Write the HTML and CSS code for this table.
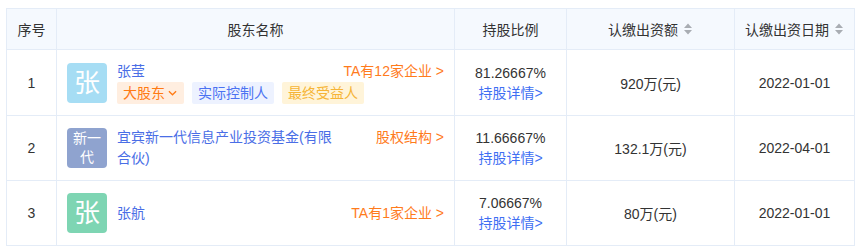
FILE: index.html
```html
<!DOCTYPE html>
<html lang="zh">
<head>
<meta charset="utf-8">
<link rel="stylesheet" href="styles.css">
</head>
<body>
<table class="grid">
  <colgroup>
    <col class="c-no"><col class="c-name"><col class="c-ratio"><col class="c-amt"><col class="c-date">
  </colgroup>
  <thead>
    <tr>
      <th>序号</th>
      <th>股东名称</th>
      <th>持股比例</th>
      <th><span class="sortable">认缴出资额<svg class="sort" viewBox="0 0 10 12"><path d="M5 0.5 L9 5 H1 Z M5 11.5 L9 7 H1 Z" fill="#a9adb3"/></svg></span></th>
      <th><span class="sortable">认缴出资日期<svg class="sort" viewBox="0 0 10 12"><path d="M5 0.5 L9 5 H1 Z M5 11.5 L9 7 H1 Z" fill="#a9adb3"/></svg></span></th>
    </tr>
  </thead>
  <tbody>
    <tr class="r1">
      <td class="num">1</td>
      <td class="holder-cell">
        <div class="holder">
          <div class="avatar av-blue">张</div>
          <div class="info">
            <div class="top">
              <div class="name">张莹</div>
              <span class="olink">TA有12家企业 &gt;</span>
            </div>
            <div class="tags">
              <span class="tag tag-orange">大股东<svg class="chev" viewBox="0 0 10 6"><path d="M1 1 L5 5 L9 1" fill="none" stroke="#ff7a14" stroke-width="1.4"/></svg></span>
              <span class="tag tag-blue">实际控制人</span>
              <span class="tag tag-yellow">最终受益人</span>
            </div>
          </div>
        </div>
      </td>
      <td class="center"><div class="pct">81.26667%</div><div class="blink">持股详情&gt;</div></td>
      <td class="center">920万(元)</td>
      <td class="center">2022-01-01</td>
    </tr>
    <tr class="r2">
      <td class="num">2</td>
      <td class="holder-cell">
        <div class="holder">
          <div class="avatar av-slate small">新一<br>代</div>
          <div class="info">
            <div class="top">
              <div class="name wrap">宜宾新一代信息产业投资基金(有限合伙)</div>
              <span class="olink">股权结构 &gt;</span>
            </div>
          </div>
        </div>
      </td>
      <td class="center"><div class="pct">11.66667%</div><div class="blink">持股详情&gt;</div></td>
      <td class="center">132.1万(元)</td>
      <td class="center">2022-04-01</td>
    </tr>
    <tr class="r3">
      <td class="num">3</td>
      <td class="holder-cell">
        <div class="holder">
          <div class="avatar av-green">张</div>
          <div class="info">
            <div class="top">
              <div class="name">张航</div>
              <span class="olink">TA有1家企业 &gt;</span>
            </div>
          </div>
        </div>
      </td>
      <td class="center"><div class="pct">7.06667%</div><div class="blink">持股详情&gt;</div></td>
      <td class="center">80万(元)</td>
      <td class="center">2022-01-01</td>
    </tr>
  </tbody>
</table>
</body>
</html>
```
FILE: styles.css
```css
body {
  margin: 8px 0 0 6px;
  background: #fff;
  font-family: "Liberation Sans", "Noto Sans CJK SC", sans-serif;
  font-size: 14px;
  color: #333;
}
.grid {
  border-collapse: collapse;
  table-layout: fixed;
  width: 848px;
}
.c-no { width: 50px; }
.c-name { width: 398px; }
.c-ratio { width: 112px; }
.c-amt { width: 168px; }
.c-date { width: 120px; }
.grid th, .grid td {
  border: 1px solid #e4ecf7;
  padding: 0;
  vertical-align: middle;
}
.grid th {
  background: #f5f9fe;
  height: 40px;
  font-weight: normal;
  color: #333;
  text-align: center;
}
.sortable {
  display: inline-flex;
  align-items: center;
  gap: 5px;
}
.sort { width: 10px; height: 12px; }
.r1 td { height: 65px; }
.r2 td, .r3 td { height: 64px; }
.num, .center { text-align: center; }
.holder-cell { padding: 0 10px !important; }
.holder {
  display: flex;
  align-items: center;
  gap: 10px;
}
.avatar {
  width: 40px;
  height: 40px;
  flex: none;
  border-radius: 4px;
  color: #fff;
  font-size: 26px;
  display: flex;
  align-items: center;
  justify-content: center;
  line-height: 1;
}
.avatar.small {
  font-size: 14px;
  line-height: 19px;
  text-align: center;
}
.av-blue { background: #a6ddf4; }
.av-slate { background: #8fa3cf; }
.av-green { background: #7ed5b3; }
.info {
  flex: 1;
  min-width: 0;
}
.top {
  display: flex;
  justify-content: space-between;
  align-items: flex-start;
}
.name {
  color: #4a6ee6;
  line-height: 20px;
}
.name.wrap {
  width: 220px;
  line-height: 21px;
}
.tags {
  display: flex;
  gap: 8px;
  margin-top: 1px;
  white-space: nowrap;
}
.tag {
  display: inline-flex;
  align-items: center;
  flex: none;
  height: 22px;
  padding: 0 6px;
  border-radius: 2px;
  line-height: 22px;
}
.tag-orange { background: #ffeee0; color: #ff7a14; }
.tag-blue { background: #edf2ff; color: #4b72f2; }
.tag-yellow { background: #fff4d9; color: #f6b436; }
.chev { width: 9px; height: 6px; margin-left: 3px; margin-right: 1px; }
.olink {
  color: #ff7b1c;
  line-height: 20px;
  white-space: nowrap;
}
.pct { line-height: 20px; }
.blink { color: #3f6ff3; line-height: 20px; }
```
